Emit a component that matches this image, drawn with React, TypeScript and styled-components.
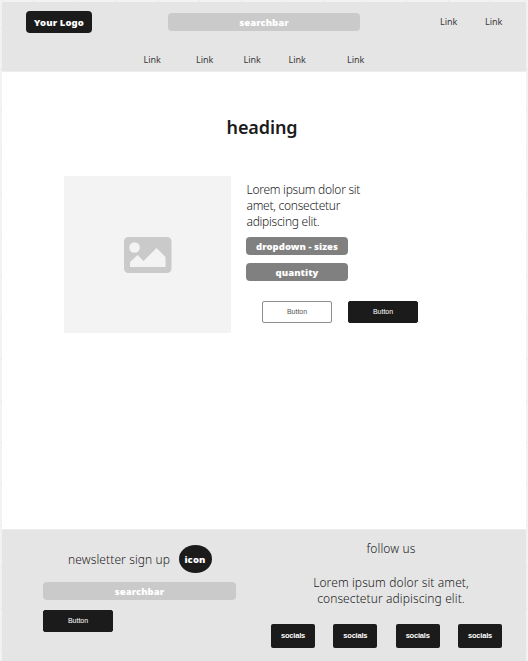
import React from "react";
import styled, { createGlobalStyle } from "styled-components";

const GlobalStyle = createGlobalStyle`
  *, *::before, *::after { box-sizing: border-box; }
  html, body { margin: 0; padding: 0; height: 661px; overflow: hidden; }
  body { background: #f2f2f2; color: #1b1b1b; font-family: "Noto Sans", sans-serif; }
  h1, p { margin: 0; }
  button { padding: 0; margin: 0; }
`;

const Canvas = styled.div`
  width: 528px;
  height: 661px;
  padding: 2px 2px 0;
  background-color: #f2f2f2;
  background-image: linear-gradient(90deg, #eaeaea 1px, transparent 1px),
    linear-gradient(#eaeaea 1px, transparent 1px);
  background-size: 41.5px 41.5px;
  background-position: 33px 27px;
`;

const Board = styled.div`
  display: flex;
  flex-direction: column;
  width: 524px;
  height: 659px;
  background: #fff;
`;

const Header = styled.header`
  height: 70px;
  background: #e5e5e5;
  border-bottom: 1px solid #ededed;
`;

const TopBar = styled.div`
  display: flex;
  align-items: flex-start;
  height: 48px;
  padding: 9px 0 0 24px;
`;

const Logo = styled.div`
  width: 66px;
  height: 22px;
  margin-right: 76px;
  border-radius: 4px;
  background: #1b1b1b;
  color: #fff;
  font: 900 9.5px/23px "Noto Sans", sans-serif;
  letter-spacing: 0.1px;
  text-align: center;
  white-space: nowrap;
`;

const Pill = styled.div<{ $w: number; $tone: string; $top?: number }>`
  flex: none;
  width: ${(p) => p.$w}px;
  height: 18px;
  margin-top: ${(p) => p.$top ?? 0}px;
  border-radius: 4px;
  background: ${(p) => p.$tone};
  color: #fff;
  font: 900 9.5px/19px "Noto Sans", sans-serif;
  letter-spacing: 0.06px;
  text-align: center;
  white-space: nowrap;
`;

const Nav = styled.nav<{ $indent: number; $top: number }>`
  display: flex;
  padding: ${(p) => p.$top}px 0 0 ${(p) => p.$indent}px;
`;

const NavLink = styled.a<{ $after: number }>`
  width: 18px;
  margin-right: ${(p) => p.$after}px;
  font: 400 9px/14px "Noto Sans", sans-serif;
  color: #3a3a3a;
  white-space: nowrap;
`;

const Main = styled.main`
  height: 457px;
  padding: 43px 0 0 62px;
`;

const Heading = styled.h1`
  width: 396px;
  height: 24px;
  font: 600 18px/24px "Noto Sans", sans-serif;
  letter-spacing: -0.1px;
  text-align: center;
`;

const Product = styled.section`
  display: flex;
  margin-top: 37px;
`;

const Placeholder = styled.div`
  display: flex;
  align-items: center;
  justify-content: center;
  width: 167px;
  height: 157px;
  background: #f3f3f3;
`;

const Details = styled.div`
  padding: 6px 0 0 15px;
`;

const Copy = styled.p<{ $ls?: number; $align?: string }>`
  font: 300 12px/16px "Noto Sans", sans-serif;
  letter-spacing: ${(p) => p.$ls ?? 0.1}px;
  text-align: ${(p) => p.$align ?? "left"};
  white-space: nowrap;
`;

const DetailCopy = styled(Copy)`
  padding-left: 0.5px;
`;

const Actions = styled.div`
  display: flex;
  gap: 16px;
  margin: 20px 0 0 16px;
`;

const Button = styled.button<{ $outline?: boolean }>`
  display: block;
  width: 70px;
  height: 22px;
  border: 1px solid ${(p) => (p.$outline ? "#8d8d8d" : "#1b1b1b")};
  border-radius: 2px;
  background: ${(p) => (p.$outline ? "#fff" : "#1b1b1b")};
  color: ${(p) => (p.$outline ? "#555" : "#fff")};
  font: 400 7px/20px "Liberation Sans", sans-serif;
  text-align: center;
`;

const Footer = styled.footer`
  display: flex;
  height: 132px;
  background: #e5e5e5;
  border-top: 1px solid #ededed;
`;

const Newsletter = styled.section`
  width: 269px;
  padding: 15px 0 0 41px;
`;

const SignUp = styled.div`
  display: flex;
  align-items: center;
  height: 29px;
  padding-left: 25px;
`;

const SignUpText = styled(Copy)`
  width: 110px;
  padding-top: 1px;
`;

const RoundIcon = styled.div`
  width: 33px;
  height: 28px;
  margin: 0 0 1px 0.5px;
  border-radius: 50%;
  background: #1b1b1b;
  color: #fff;
  font: 900 9.5px/29px "Noto Sans", sans-serif;
  letter-spacing: 0.15px;
  text-align: center;
`;

const FooterAction = styled.div`
  margin-top: 10px;
`;

const Follow = styled.section`
  width: 231px;
  padding-top: 11px;
`;

const FollowCopy = styled.div<{ $top: number }>`
  width: 232px;
  margin: ${(p) => p.$top}px 0 0 4px;
`;

const Socials = styled.div`
  display: flex;
  justify-content: space-between;
  margin-top: 17px;
`;

const Social = styled.a`
  width: 44px;
  height: 24px;
  border-radius: 2px;
  background: #1b1b1b;
  color: #fff;
  font: 700 7.5px/23px "Liberation Sans", sans-serif;
  letter-spacing: -0.2px;
  text-align: center;
`;

const ImageIcon = () => (
  <svg width="48" height="36" viewBox="0 0 48 36" aria-label="Image">
    <rect width="47.5" height="36" rx="4.5" fill="#cacaca" />
    <circle cx="10.5" cy="10.5" r="5.3" fill="#f3f3f3" />
    <path d="M6 30V25L13.5 18L19.5 24L32.5 11L41.5 20V30Z" fill="#f3f3f3" />
  </svg>
);

const accountGaps = [27, 0];
const menuGaps = [34.5, 29.5, 27, 40.5, 0];
const socialIds = [1, 2, 3, 4];

export default function App() {
  return (
    <>
      <GlobalStyle />
      <Canvas>
        <Board>
          <Header>
            <TopBar>
              <Logo>Your Logo</Logo>
              <Pill $w={192} $tone="#cacaca" $top={2}>searchbar</Pill>
              <Nav $indent={80} $top={4}>
                {accountGaps.map((gap, i) => (
                  <NavLink key={i} $after={gap}>Link</NavLink>
                ))}
              </Nav>
            </TopBar>
            <Nav $indent={141.5} $top={3}>
              {menuGaps.map((gap, i) => (
                <NavLink key={i} $after={gap}>Link</NavLink>
              ))}
            </Nav>
          </Header>
          <Main>
            <Heading>heading</Heading>
            <Product>
              <Placeholder><ImageIcon /></Placeholder>
              <Details>
                <DetailCopy $ls={-0.27}>
                  Lorem ipsum dolor sit<br />amet, consectetur<br />adipiscing elit.
                </DetailCopy>
                <Pill $w={102} $tone="#808080" $top={7}>dropdown - sizes</Pill>
                <Pill $w={102} $tone="#808080" $top={8}>quantity</Pill>
                <Actions>
                  <Button $outline>Button</Button>
                  <Button>Button</Button>
                </Actions>
              </Details>
            </Product>
          </Main>
          <Footer>
            <Newsletter>
              <SignUp>
                <SignUpText>newsletter sign up</SignUpText>
                <RoundIcon>icon</RoundIcon>
              </SignUp>
              <Pill $w={193} $tone="#cacaca" $top={8}>searchbar</Pill>
              <FooterAction><Button>Button</Button></FooterAction>
            </Newsletter>
            <Follow>
              <FollowCopy $top={0}><Copy $align="center">follow us</Copy></FollowCopy>
              <FollowCopy $top={18}>
                <Copy $align="center">Lorem ipsum dolor sit amet,<br />consectetur adipiscing elit.</Copy>
              </FollowCopy>
              <Socials>
                {socialIds.map((id) => <Social key={id}>socials</Social>)}
              </Socials>
            </Follow>
          </Footer>
        </Board>
      </Canvas>
    </>
  );
}
